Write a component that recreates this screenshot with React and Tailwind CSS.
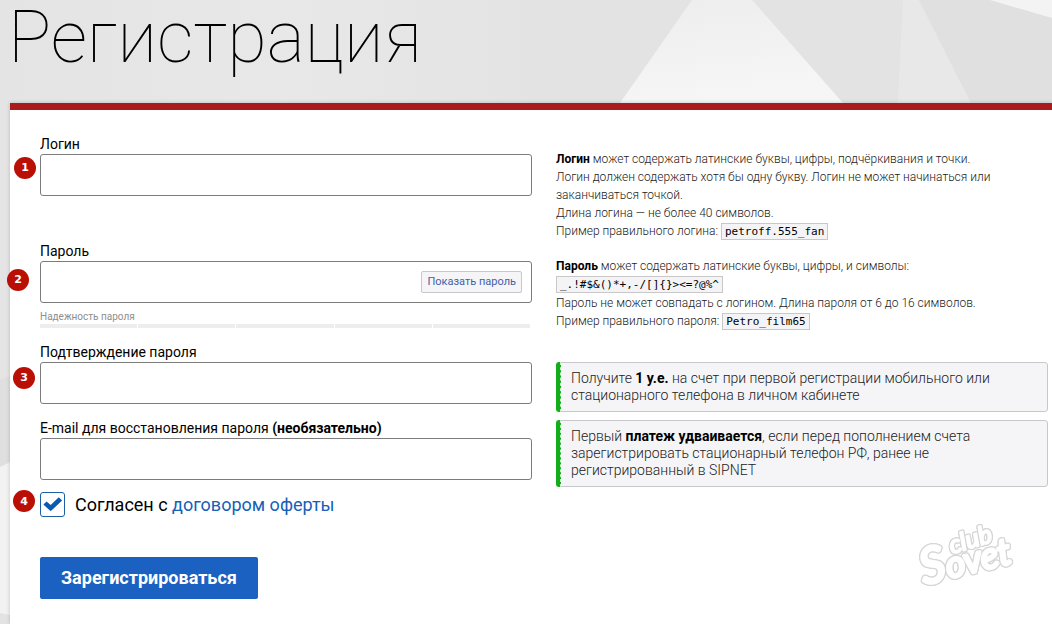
import { useState } from "react";

function Backdrop() {
  return (
    <svg
      aria-hidden="true"
      className="absolute inset-0 h-full w-full"
      viewBox="0 0 1052 624"
      preserveAspectRatio="xMinYMin slice"
    >
      <defs>
        <linearGradient id="peak" x1="0" y1="0" x2="0.3" y2="1">
          <stop offset="0" stopColor="#ededed" />
          <stop offset="1" stopColor="#f6f6f6" />
        </linearGradient>
        <linearGradient id="left" x1="0" y1="0" x2="1" y2="0">
          <stop offset="0" stopColor="#e4e4e4" />
          <stop offset="0.5" stopColor="#e8e8e8" />
          <stop offset="1" stopColor="#e3e3e3" />
        </linearGradient>
      </defs>
      <rect width="1052" height="624" fill="#e3e3e3" />
      <rect width="560" height="380" fill="url(#left)" />
      <polygon points="692,0 752,0 843,103 620,103" fill="url(#peak)" />
      <polygon points="903,0 919,0 971,103 898,103" fill="#e8e8e8" />
      <polygon points="919,0 1052,0 1052,103 971,103" fill="#e0e0e0" />
      <polygon points="990,0 1052,0 1052,18" fill="#f3f3f3" />
      <polygon points="0,380 10,376 10,462 0,467" fill="#dfdfdf" />
      <polygon points="0,467 10,462 10,615 0,613" fill="#f2f2f2" />
    </svg>
  );
}

function Badge({ children, className }) {
  return (
    <span
      className={`absolute flex size-[22px] items-center justify-center rounded-full bg-[#b90f04] font-['DejaVu_Sans',sans-serif] text-[11px] font-bold text-white ${className}`}
    >
      {children}
    </span>
  );
}

function Field({ id, label, type = "text", badge, badgeClass, children }) {
  return (
    <div>
      <label htmlFor={id} className="block text-sm leading-5">
        {label}
      </label>
      <div className="relative">
        {badge && <Badge className={badgeClass}>{badge}</Badge>}
        <input
          id={id}
          type={type}
          className="block h-[42px] w-full rounded-[3px] border border-[#7c7c7c] bg-white px-3 text-base outline-none"
        />
        {children}
      </div>
    </div>
  );
}

function Code({ children }) {
  return (
    <code className="border border-[#c8c8c8] bg-[#f4f4f6] px-[3px] py-px font-['DejaVu_Sans_Mono',monospace] text-[11px] text-black">
      {children}
    </code>
  );
}

function Notice({ children }) {
  return (
    <div className="flex overflow-hidden rounded-[3px]">
      <span className="w-[5px] shrink-0 border-r border-dashed border-[#c9eccb] bg-[#12ad1b]" />
      <p className="grow rounded-r-[3px] border border-l-0 border-[#c8c8cc] bg-[#f5f5f8] py-[7px] pr-8 pl-[10px] text-sm leading-[17px] font-light">
        {children}
      </p>
    </div>
  );
}

function Watermark() {
  return (
    <svg
      role="img"
      aria-label="club Sovet"
      className="absolute right-[30px] bottom-[30px] h-[76px] w-[104px] overflow-visible [filter:drop-shadow(1px_0_0_#d6d6d6)_drop-shadow(-1px_0_0_#d6d6d6)_drop-shadow(0_1px_0_#d6d6d6)_drop-shadow(0_-1px_0_#d6d6d6)]"
      viewBox="0 0 104 76"
      fill="#fff"
      stroke="#fff"
      strokeWidth="3"
      strokeLinejoin="round"
      fontFamily="Lato, sans-serif"
      fontStyle="italic"
      fontWeight="400"
    >
      <text x="6" y="67" fontSize="50" transform="rotate(-14 6 67)">
        S<tspan fontSize="37">ovet</tspan>
      </text>
      <text x="34" y="36" fontSize="25" strokeWidth="2" transform="rotate(-17 34 36)">
        club
      </text>
    </svg>
  );
}

export default function App() {
  const [shown, setShown] = useState(false);
  const [agreed, setAgreed] = useState(true);

  return (
    <div className="relative flex min-h-screen flex-col bg-[#e3e3e3] font-[Roboto,sans-serif] text-black">
      <Backdrop />
      <header className="relative h-[103px] pl-[8px]">
        <h1 className="text-[72px] leading-[76px] font-thin">Регистрация</h1>
      </header>

      <main className="relative ml-[10px] grow border-t-[7px] border-[#ab1a1c] bg-white pt-6 pr-1 pb-6 pl-[30px] shadow-[0_0_4px_rgba(0,0,0,0.2)]">
        <form className="grid grid-cols-2 gap-x-6" onSubmit={(e) => e.preventDefault()}>
          <div>
            <Field id="login" label="Логин" badge="1" badgeClass="top-[3px] -left-[26px]" />
            <div className="mt-[45px]">
              <Field
                id="password"
                label="Пароль"
                type={shown ? "text" : "password"}
                badge="2"
                badgeClass="top-2 -left-[33px]"
              >
                <button
                  type="button"
                  onClick={() => setShown(!shown)}
                  className="absolute top-[10px] right-[10px] h-[22px] rounded-[2px] border border-[#c8c8cc] bg-[#f5f5f8] px-[5px] text-[11px] text-[#4460a8]"
                >
                  Показать пароль
                </button>
              </Field>
            </div>
            <div className="mt-[6px] text-[10px] leading-[15px] text-[#8e8e8e]">
              Надежность пароля
              <div className="mr-[2px] grid grid-cols-5 gap-px">
                <span className="h-1 bg-[#ededed]" />
                <span className="h-1 bg-[#ededed]" />
                <span className="h-1 bg-[#ededed]" />
                <span className="h-1 bg-[#ededed]" />
                <span className="h-1 bg-[#ededed]" />
              </div>
            </div>
            <div className="mt-[14px]">
              <Field
                id="confirm"
                label="Подтверждение пароля"
                type="password"
                badge="3"
                badgeClass="top-[5px] -left-[27px]"
              />
            </div>
            <div className="mt-[14px]">
              <Field
                id="email"
                label={
                  <>
                    E-mail для восстановления пароля <b className="font-bold">(необязательно)</b>
                  </>
                }
                type="email"
              />
            </div>
            <div className="relative mt-3 flex items-center gap-[10px] text-lg leading-[25px]">
              <Badge className="-top-[2px] -left-[27px]">4</Badge>
              <span className="relative size-[25px]">
                <input
                  id="agree"
                  type="checkbox"
                  checked={agreed}
                  onChange={() => setAgreed(!agreed)}
                  className="block size-[25px] appearance-none rounded-[3px] border border-[#1b5fa5] bg-white"
                />
                {agreed && (
                  <svg
                    aria-hidden="true"
                    viewBox="0 0 25 25"
                    className="pointer-events-none absolute inset-0"
                    fill="#0a5bb0"
                  >
                    <path d="M3.4 12.4 L6.6 9.4 L10.7 13 L18.8 5.2 L22.1 8.6 L11.4 18.6 Q10.6 19.2 9.9 18.6 Z" />
                  </svg>
                )}
              </span>
              <label htmlFor="agree">
                Согласен с{" "}
                <a href="#offer" className="text-[#1560b8]">
                  договором оферты
                </a>
              </label>
            </div>
            <button
              type="submit"
              className="mt-10 h-[42px] rounded-[2px] bg-[#1b61c1] px-[21px] text-lg font-bold text-white"
            >
              Зарегистрироваться
            </button>
          </div>

          <div className="pt-4 text-[#222]">
            <p className="pr-8 text-xs leading-[18px] font-light">
              <b className="font-bold text-black">Логин</b> может содержать латинские буквы, цифры,
              подчёркивания и точки.
              <br />
              Логин должен содержать хотя бы одну букву. Логин не может начинаться или заканчиваться
              точкой.
              <br />
              Длина логина — не более 40 символов.
              <br />
              Пример правильного логина: <Code>petroff.555_fan</Code>
            </p>
            <p className="mt-4 text-xs leading-[18px] font-light">
              <b className="font-bold text-black">Пароль</b> может содержать латинские буквы, цифры, и
              символы:
              <br />
              <Code>{"_.!#$&()*+,-/[]{}><=?@%^"}</Code>
              <br />
              Пароль не может совпадать с логином. Длина пароля от 6 до 16 символов.
              <br />
              Пример правильного пароля: <Code>Petro_film65</Code>
            </p>
            <div className="mt-[31px] flex flex-col gap-2">
              <Notice>
                Получите <b className="font-bold text-black">1 у.е.</b> на счет при первой регистрации
                мобильного или стационарного телефона в личном кабинете
              </Notice>
              <Notice>
                Первый <b className="font-bold text-black">платеж удваивается</b>, если перед
                пополнением счета зарегистрировать стационарный телефон РФ, ранее не регистрированный
                в SIPNET
              </Notice>
            </div>
          </div>
        </form>
        <Watermark />
      </main>
    </div>
  );
}
